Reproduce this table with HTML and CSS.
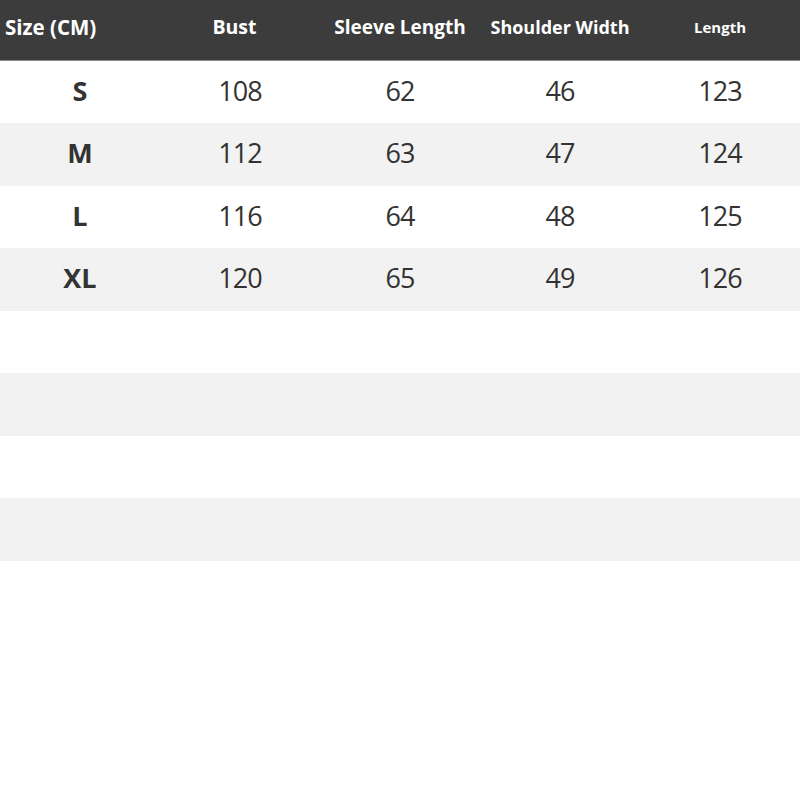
FILE: index.html
```html
<!DOCTYPE html>
<html>
<head>
<meta charset="utf-8">
<link rel="stylesheet" href="styles.css">
</head>
<body>
<div class="table">
  <div class="row head">
    <div class="cell first">Size (CM)</div>
    <div class="cell bust">Bust</div>
    <div class="cell sleeve">Sleeve Length</div>
    <div class="cell shoulder">Shoulder Width</div>
    <div class="cell small">Length</div>
  </div>
  <div class="row">
    <div class="cell size">S</div><div class="cell">108</div><div class="cell">62</div><div class="cell">46</div><div class="cell">123</div>
  </div>
  <div class="row alt">
    <div class="cell size">M</div><div class="cell">112</div><div class="cell">63</div><div class="cell">47</div><div class="cell">124</div>
  </div>
  <div class="row">
    <div class="cell size">L</div><div class="cell">116</div><div class="cell">64</div><div class="cell">48</div><div class="cell">125</div>
  </div>
  <div class="row alt">
    <div class="cell size">XL</div><div class="cell">120</div><div class="cell">65</div><div class="cell">49</div><div class="cell">126</div>
  </div>
  <div class="row"></div>
  <div class="row alt"></div>
  <div class="row"></div>
  <div class="row alt"></div>
</div>
</body>
</html>
```
FILE: styles.css
```css
html, body {
  margin: 0;
  padding: 0;
  background: #ffffff;
}
body {
  font-family: "Open Sans", "Noto Sans", sans-serif;
  color: #333333;
}
.table {
  width: 800px;
  display: flex;
  flex-direction: column;
}
.row {
  display: grid;
  grid-template-columns: repeat(5, 160px);
  height: 62.5px;
  background: #ffffff;
}
.row.alt {
  background: #f2f2f2;
}
.cell {
  display: flex;
  align-items: center;
  justify-content: center;
  font-size: 27px;
  font-weight: 500;
  letter-spacing: -1px;
  padding-bottom: 3px;
}
.cell.size {
  font-weight: 700;
  font-size: 27px;
  letter-spacing: 0;
}
.row.head {
  height: 59.5px;
  background: #3c3c3c;
  border-bottom: 1px solid #8a8a8a;
  color: #ffffff;
}
.row.head .cell {
  font-size: 19px;
  font-weight: 700;
  letter-spacing: 0;
  padding-bottom: 6px;
}
.row.head .cell.first {
  justify-content: flex-start;
  padding-left: 5px;
  font-size: 20.5px;
}
.row.head .cell.bust {
  padding-right: 11px;
  font-size: 19.5px;
}
.row.head .cell.shoulder {
  font-size: 18px;
}
.row.head .cell.small {
  font-size: 15px;
}
```
